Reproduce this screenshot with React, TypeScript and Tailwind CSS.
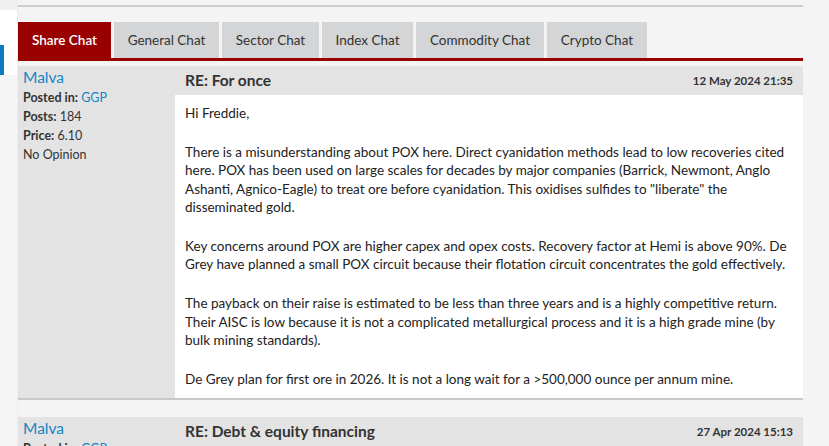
const tabs = ["Share Chat", "General Chat", "Sector Chat", "Index Chat", "Commodity Chat", "Crypto Chat"];

const tabWidths = ["w-[93px]", "w-[105px]", "w-[97px]", "w-[91px]", "w-[128px]", "w-[100px]"];

type Post = {
  author: string;
  epic: string;
  posts: string;
  price: string;
  opinion: string;
  title: string;
  date: string;
  body: string[];
};

const posts: Post[] = [
  {
    author: "Malva",
    epic: "GGP",
    posts: "184",
    price: "6.10",
    opinion: "No Opinion",
    title: "RE: For once",
    date: "12 May 2024 21:35",
    body: [
      "Hi Freddie,",
      'There is a misunderstanding about POX here. Direct cyanidation methods lead to low recoveries cited here. POX has been used on large scales for decades by major companies (Barrick, Newmont, Anglo Ashanti, Agnico-Eagle) to treat ore before cyanidation. This oxidises sulfides to "liberate" the disseminated gold.',
      "Key concerns around POX are higher capex and opex costs. Recovery factor at Hemi is above 90%. De Grey have planned a small POX circuit because their flotation circuit concentrates the gold effectively.",
      "The payback on their raise is estimated to be less than three years and is a highly competitive return. Their AISC is low because it is not a complicated metallurgical process and it is a high grade mine (by bulk mining standards).",
      "De Grey plan for first ore in 2026. It is not a long wait for a >500,000 ounce per annum mine.",
    ],
  },
  {
    author: "Malva",
    epic: "GGP",
    posts: "184",
    price: "6.10",
    opinion: "No Opinion",
    title: "RE: Debt & equity financing",
    date: "27 Apr 2024 15:13",
    body: ["Thanks for the update on the financing."],
  },
];

function PostCard({ p }: { p: Post }) {
  return (
    <div className="flex border-b-2 border-[#c9c9c9] mb-[17px]">
      <div className="w-[157px] shrink-0 bg-[#e3e3e3] px-[5px] pt-[1px] text-[12.5px] leading-[19px] text-[#333]">
        <div className="text-[15.5px] leading-[21px] text-[#1486c4]">{p.author}</div>
        <div>
          <span className="font-bold">Posted in:</span> <span className="text-[#1486c4]">{p.epic}</span>
        </div>
        <div>
          <span className="font-bold">Posts:</span> {p.posts}
        </div>
        <div>
          <span className="font-bold">Price:</span> {p.price}
        </div>
        <div>{p.opinion}</div>
      </div>
      <div className="flex-1 flex flex-col">
        <div className="h-[29px] bg-[#e3e3e3] flex items-center justify-between pl-[10px] pr-[10px]">
          <span className="text-[15.5px] font-bold text-[#333]">{p.title}</span>
          <span className="text-[11.5px] font-bold text-[#333]">{p.date}</span>
        </div>
        <div className="bg-white pl-[10px] pr-0 pt-[9px] pb-[10px] text-[13.5px] leading-[18.2px] text-[#222]">
          {p.body.map((t, i) => (
            <p key={i} className={i < p.body.length - 1 ? "mb-[21px]" : ""}>
              {t}
            </p>
          ))}
        </div>
      </div>
    </div>
  );
}

export default function App() {
  return (
    <div className="w-[829px] h-[446px] overflow-hidden bg-[#f4f4f4] flex" style={{ fontFamily: "Lato, 'Noto Sans', sans-serif" }}>
      <div className="w-[18px] shrink-0 flex flex-col border-r border-[#ececec]">
        <div className="h-[10px] bg-[#f0f0f0]" />
        <div className="h-[35px] bg-white" />
        <div className="h-[30px] bg-white flex">
          <div className="w-[4px] bg-[#0b7cc1]" />
        </div>
        <div className="flex-1 bg-[#f5f5f5]" />
      </div>
      <div className="w-[785px] shrink-0">
        <div className="mt-[5px] h-[2px] bg-[#cdcdcd]" />
        <div className="mt-[15px] flex gap-[3px] border-b-[3px] border-[#990000]">
          {tabs.map((t, i) => (
            <div
              key={t}
              className={`${tabWidths[i]} h-[36px] flex items-center justify-center text-[13.5px] ${
                i === 0 ? "bg-[#990000] text-white font-semibold" : "bg-[#d4d5d7] text-[#333]"
              }`}
            >
              {t}
            </div>
          ))}
        </div>
        <div className="mt-[5px]">
          {posts.map((p, i) => (
            <PostCard key={i} p={p} />
          ))}
        </div>
      </div>
    </div>
  );
}
